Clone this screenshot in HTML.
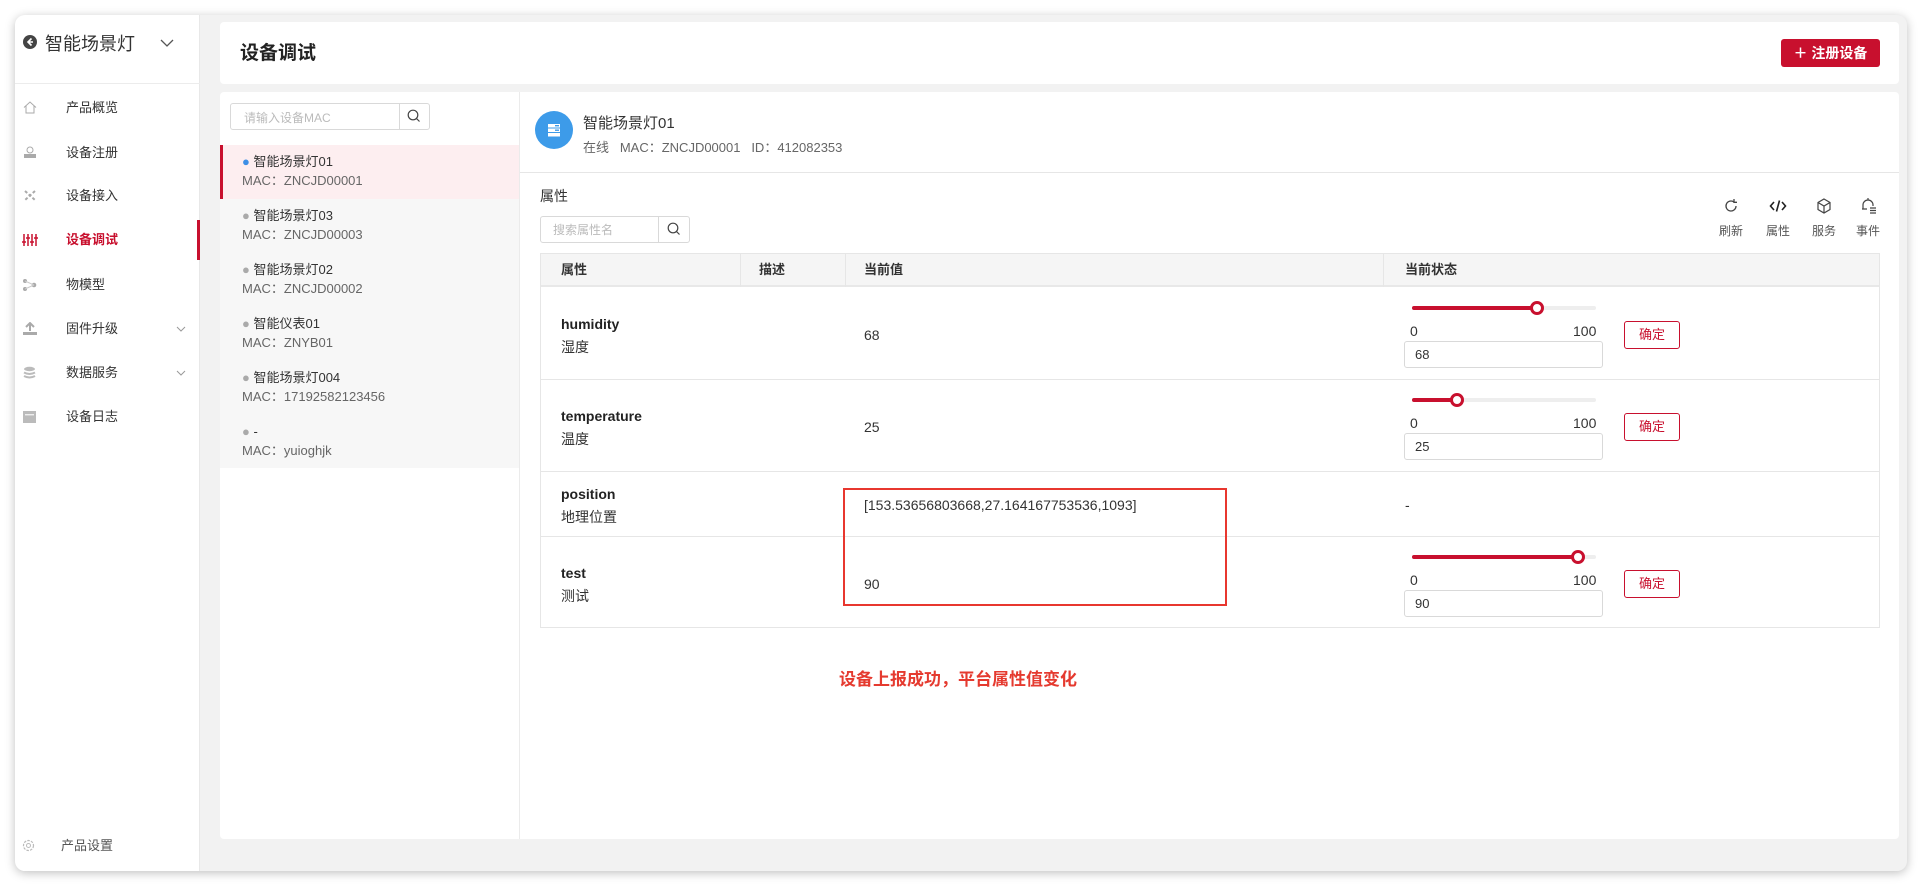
<!DOCTYPE html>
<html><head><meta charset="utf-8"><style>
*{margin:0;padding:0;box-sizing:border-box}
body{width:1923px;height:886px;background:#fff;font-family:"Liberation Sans","Noto Sans CJK SC",sans-serif;position:relative;overflow:hidden;color:#333}
.a{position:absolute}
.win{left:15px;top:15px;width:1892px;height:856px;background:#f2f2f2;border-radius:10px;box-shadow:0 2px 10px rgba(0,0,0,.25);overflow:hidden}
.side{left:15px;top:15px;width:185px;height:856px;background:#fff;border-right:1px solid #e8e8e8;border-radius:10px 0 0 10px}
.mi{position:absolute;left:66px;font-size:13px;color:#333;line-height:16px}
.t13{font-size:13px;line-height:16px}
.gray{color:#666}
.th{position:absolute;top:253px;height:34px;line-height:34px;font-size:13px;font-weight:bold;color:#333}
.vl{position:absolute;width:1px;background:#e6e6e6}
.hl{position:absolute;height:1px;background:#e6e6e6}
.track{position:absolute;height:4px;background:#eee;border-radius:2px;width:184px}
.fill{position:absolute;left:0;top:0;height:4px;background:#c8102e;border-radius:2px}
.knob{position:absolute;top:-5px;width:14px;height:14px;border:3px solid #c8102e;background:#fff;border-radius:50%}
.inp{position:absolute;width:199px;height:27px;border:1px solid #d9d9d9;border-radius:3px;font-size:13px;line-height:25px;padding-left:10px}
.ok{position:absolute;width:56px;height:28px;border:1px solid #c8102e;border-radius:3px;color:#c8102e;font-size:13px;line-height:26px;text-align:center}
.num{position:absolute;font-size:14px;color:#333}
</style></head><body>
<div class="a win"></div>
<div class="a side"></div>
<svg class="a" style="left:22px;top:34px" width="16" height="16" viewBox="0 0 16 16"><circle cx="8" cy="8" r="7" fill="#444"/><path d="M9.5 4.5L6 8l3.5 3.5M6 8h5" stroke="#fff" stroke-width="1.6" fill="none"/></svg>
<div class="a" style="left:45px;top:30px;font-size:18px;color:#333">智能场景灯</div>
<svg class="a" style="left:160px;top:38px" width="14" height="10"><path d="M1 2l6 6 6-6" stroke="#555" stroke-width="1.3" fill="none"/></svg>
<div class="hl" style="left:15px;top:83px;width:185px;background:#ececec"></div>
<svg class="a" style="left:23px;top:101px" width="14" height="13"><path d="M1 6.5L7 1l6 5.5M3 5v7h8V5" stroke="#aaa" fill="none"/></svg>
<div class="mi" style="top:100px">产品概览</div>
<svg class="a" style="left:23px;top:146px" width="14" height="13"><rect x="1" y="8" width="12" height="4" fill="#aaa"/><circle cx="7" cy="4" r="3" stroke="#aaa" fill="none"/></svg>
<div class="mi" style="top:145px">设备注册</div>
<svg class="a" style="left:23px;top:189px" width="14" height="13"><path d="M2 2l10 9M12 2L2 11" stroke="#aaa" stroke-width="2" stroke-dasharray="3 2"/></svg>
<div class="mi" style="top:188px">设备接入</div>
<svg class="a" style="left:22px;top:233px" width="16" height="14"><path d="M2 1v12M6 1v12M10 1v12M14 1v12" stroke="#c8102e" stroke-width="1.5"/><path d="M0 9h4M4 5h4M8 9h4M12 5h4" stroke="#c8102e" stroke-width="1.5"/></svg>
<div class="mi" style="top:232px;color:#c8102e;font-weight:bold">设备调试</div>
<div class="a" style="left:197px;top:220px;width:3px;height:40px;background:#c8102e"></div>
<svg class="a" style="left:22px;top:278px" width="16" height="14"><circle cx="3" cy="3" r="2" fill="#aaa"/><circle cx="3" cy="11" r="2" fill="#aaa"/><circle cx="12" cy="7" r="2.3" fill="#aaa"/><path d="M3 3l9 4M3 11l9-4" stroke="#ccc"/></svg>
<div class="mi" style="top:277px">物模型</div>
<svg class="a" style="left:22px;top:322px" width="16" height="14"><path d="M8 1v8M4 5l4-4 4 4" stroke="#aaa" stroke-width="2" fill="none"/><rect x="1" y="10" width="14" height="3" fill="#aaa"/></svg>
<div class="mi" style="top:321px">固件升级</div>
<svg class="a" style="left:176px;top:326px" width="10" height="7"><path d="M1 1l4 4 4-4" stroke="#999" fill="none"/></svg>
<svg class="a" style="left:23px;top:366px" width="13" height="15"><ellipse cx="6.5" cy="3" rx="5.5" ry="2.2" fill="#bbb"/><path d="M1 6.5q5.5 3 11 0M1 10q5.5 3 11 0" stroke="#bbb" stroke-width="2" fill="none"/></svg>
<div class="mi" style="top:365px">数据服务</div>
<svg class="a" style="left:176px;top:370px" width="10" height="7"><path d="M1 1l4 4 4-4" stroke="#999" fill="none"/></svg>
<svg class="a" style="left:23px;top:410px" width="13" height="13"><rect x="0" y="1" width="13" height="12" fill="#bbb"/><rect x="2" y="4" width="9" height="1.4" fill="#eee"/></svg>
<div class="mi" style="top:409px">设备日志</div>
<svg class="a" style="left:21px;top:838px" width="15" height="15"><circle cx="7.5" cy="7.5" r="5" stroke="#bbb" stroke-width="1.2" stroke-dasharray="2.5 1.2" fill="none"/><circle cx="7.5" cy="7.5" r="2" stroke="#bbb" fill="none"/></svg>
<div class="mi" style="top:838px;left:61px;color:#555">产品设置</div>

<div class="a" style="left:220px;top:22px;width:1679px;height:62px;background:#fff;border-radius:4px"></div>
<div class="a" style="left:240px;top:38px;font-size:19px;font-weight:bold;color:#222">设备调试</div>
<div class="a" style="left:1781px;top:39px;width:99px;height:28px;background:#c8102e;border-radius:3px;color:#fff;font-size:14px;font-weight:bold;line-height:28px;text-align:center">＋ 注册设备</div>

<div class="a" style="left:220px;top:92px;width:1679px;height:747px;background:#fff;border-radius:4px"></div>
<div class="vl" style="left:519px;top:92px;height:747px;background:#ebebeb"></div>
<div class="a" style="left:230px;top:103px;width:200px;height:27px;border:1px solid #d9d9d9;border-radius:3px"></div>
<div class="vl" style="left:399px;top:103px;height:27px;background:#d9d9d9"></div>
<div class="a" style="left:244px;top:109px;font-size:12px;color:#bbb">请输入设备MAC</div>
<svg class="a" style="left:407px;top:109px" width="14" height="14"><circle cx="6" cy="6" r="4.8" stroke="#444" stroke-width="1.2" fill="none"/><path d="M9.5 9.5l3 3" stroke="#444" stroke-width="1.2"/></svg>

<div class="a" style="left:220px;top:145px;width:299px;height:323px;background:#f7f7f7"></div>
<div class="a" style="left:220px;top:145px;width:299px;height:54px;background:#fdeef0;border-left:3px solid #c8102e"></div>
<div class="a t13" style="left:242px;top:154px"><span style="color:#3d8fe6">●</span> 智能场景灯01</div>
<div class="a t13 gray" style="left:242px;top:173px">MAC：ZNCJD00001</div>
<div class="a t13" style="left:242px;top:208px"><span style="color:#aaa">●</span> 智能场景灯03</div>
<div class="a t13 gray" style="left:242px;top:227px">MAC：ZNCJD00003</div>
<div class="a t13" style="left:242px;top:262px"><span style="color:#aaa">●</span> 智能场景灯02</div>
<div class="a t13 gray" style="left:242px;top:281px">MAC：ZNCJD00002</div>
<div class="a t13" style="left:242px;top:316px"><span style="color:#aaa">●</span> 智能仪表01</div>
<div class="a t13 gray" style="left:242px;top:335px">MAC：ZNYB01</div>
<div class="a t13" style="left:242px;top:370px"><span style="color:#aaa">●</span> 智能场景灯004</div>
<div class="a t13 gray" style="left:242px;top:389px">MAC：17192582123456</div>
<div class="a t13" style="left:242px;top:424px"><span style="color:#aaa">●</span> -</div>
<div class="a t13 gray" style="left:242px;top:443px">MAC：yuioghjk</div>

<div class="a" style="left:535px;top:111px;width:38px;height:38px;border-radius:50%;background:#3d9be9"></div>
<svg class="a" style="left:547px;top:123px" width="14" height="14"><rect x="1" y="1" width="12" height="3.5" fill="#fff"/><rect x="1" y="5.5" width="12" height="3.5" fill="#fff"/><rect x="1" y="10" width="12" height="3.5" fill="#fff"/><rect x="8" y="2" width="4" height="1.4" fill="#3d9be9"/><rect x="8" y="6.5" width="4" height="1.4" fill="#3d9be9"/></svg>
<div class="a" style="left:583px;top:112px;font-size:15px;color:#333">智能场景灯01</div>
<div class="a gray" style="left:583px;top:137px;font-size:13px">在线&nbsp;&nbsp;&nbsp;MAC：ZNCJD00001&nbsp;&nbsp;&nbsp;ID：412082353</div>
<div class="hl" style="left:520px;top:172px;width:1379px"></div>
<div class="a" style="left:540px;top:186px;font-size:14px;color:#333">属性</div>
<div class="a" style="left:540px;top:216px;width:150px;height:27px;border:1px solid #d9d9d9;border-radius:3px"></div>
<div class="vl" style="left:658px;top:216px;height:27px;background:#d9d9d9"></div>
<div class="a" style="left:553px;top:221px;font-size:12px;color:#bbb">搜索属性名</div>
<svg class="a" style="left:667px;top:222px" width="14" height="14"><circle cx="6" cy="6" r="4.8" stroke="#444" stroke-width="1.2" fill="none"/><path d="M9.5 9.5l3 3" stroke="#444" stroke-width="1.2"/></svg>

<svg class="a" style="left:1723px;top:198px" width="16" height="16"><path d="M13 8a5 5 0 1 1-2-4" stroke="#444" stroke-width="1.3" fill="none"/><path d="M11 1v3.3H14" stroke="#444" stroke-width="1.3" fill="none"/></svg>
<svg class="a" style="left:1769px;top:198px" width="18" height="16"><path d="M5 4L1.5 8 5 12M13 4l3.5 4-3.5 4M10.5 2.5l-3 11" stroke="#222" stroke-width="1.6" fill="none"/></svg>
<svg class="a" style="left:1816px;top:198px" width="16" height="16"><path d="M8 1l6 3.5v7L8 15l-6-3.5v-7z M2 4.5L8 8l6-3.5 M8 8v7" stroke="#444" stroke-width="1.2" fill="none"/></svg>
<svg class="a" style="left:1860px;top:197px" width="18" height="18"><path d="M3 12V8a5 5 0 0 1 10 0v1M2 12h5M8 1v2" stroke="#444" stroke-width="1.2" fill="none"/><path d="M10 11h6M10 13.5h6M10 16h6" stroke="#444" stroke-width="1.2"/></svg>
<div class="a" style="left:1719px;top:222px;font-size:12px;color:#555">刷新</div>
<div class="a" style="left:1766px;top:222px;font-size:12px;color:#555">属性</div>
<div class="a" style="left:1812px;top:222px;font-size:12px;color:#555">服务</div>
<div class="a" style="left:1856px;top:222px;font-size:12px;color:#555">事件</div>

<div class="a" style="left:540px;top:253px;width:1340px;height:375px;border:1px solid #e6e6e6"></div>
<div class="a" style="left:541px;top:254px;width:1338px;height:33px;background:#f5f5f5;border-bottom:2px solid #e8e8e8"></div>
<div class="vl" style="left:740px;top:254px;height:33px"></div>
<div class="vl" style="left:845px;top:254px;height:33px"></div>
<div class="vl" style="left:1383px;top:254px;height:33px"></div>
<div class="th" style="left:561px">属性</div>
<div class="th" style="left:759px">描述</div>
<div class="th" style="left:864px">当前值</div>
<div class="th" style="left:1405px">当前状态</div>
<div class="hl" style="left:541px;top:379px;width:1338px"></div>
<div class="hl" style="left:541px;top:471px;width:1338px"></div>
<div class="hl" style="left:541px;top:536px;width:1338px"></div>

<div class="a" style="left:561px;top:316px;font-size:14px;font-weight:bold;color:#222">humidity</div>
<div class="a" style="left:561px;top:337px;font-size:14px">湿度</div>
<div class="num" style="left:864px;top:327px">68</div>
<div class="track" style="left:1412px;top:306px"><div class="fill" style="width:125px"></div><div class="knob" style="left:118px"></div></div>
<div class="num" style="left:1410px;top:323px">0</div><div class="num" style="left:1573px;top:323px">100</div>
<div class="inp" style="left:1404px;top:341px">68</div>
<div class="ok" style="left:1624px;top:321px">确定</div>

<div class="a" style="left:561px;top:408px;font-size:14px;font-weight:bold;color:#222">temperature</div>
<div class="a" style="left:561px;top:429px;font-size:14px">温度</div>
<div class="num" style="left:864px;top:419px">25</div>
<div class="track" style="left:1412px;top:398px"><div class="fill" style="width:46px"></div><div class="knob" style="left:38px"></div></div>
<div class="num" style="left:1410px;top:415px">0</div><div class="num" style="left:1573px;top:415px">100</div>
<div class="inp" style="left:1404px;top:433px">25</div>
<div class="ok" style="left:1624px;top:413px">确定</div>

<div class="a" style="left:561px;top:486px;font-size:14px;font-weight:bold;color:#222">position</div>
<div class="a" style="left:561px;top:507px;font-size:14px">地理位置</div>
<div class="num" style="left:864px;top:497px">[153.53656803668,27.164167753536,1093]</div>
<div class="num" style="left:1405px;top:497px">-</div>

<div class="a" style="left:561px;top:565px;font-size:14px;font-weight:bold;color:#222">test</div>
<div class="a" style="left:561px;top:586px;font-size:14px">测试</div>
<div class="num" style="left:864px;top:576px">90</div>
<div class="track" style="left:1412px;top:555px"><div class="fill" style="width:166px"></div><div class="knob" style="left:159px"></div></div>
<div class="num" style="left:1410px;top:572px">0</div><div class="num" style="left:1573px;top:572px">100</div>
<div class="inp" style="left:1404px;top:590px">90</div>
<div class="ok" style="left:1624px;top:570px">确定</div>

<div class="a" style="left:843px;top:488px;width:384px;height:118px;border:2px solid #e8372f"></div>
<div class="a" style="left:839px;top:665px;font-size:17px;font-weight:bold;color:#e53a2f">设备上报成功，平台属性值变化</div>
</body></html>
